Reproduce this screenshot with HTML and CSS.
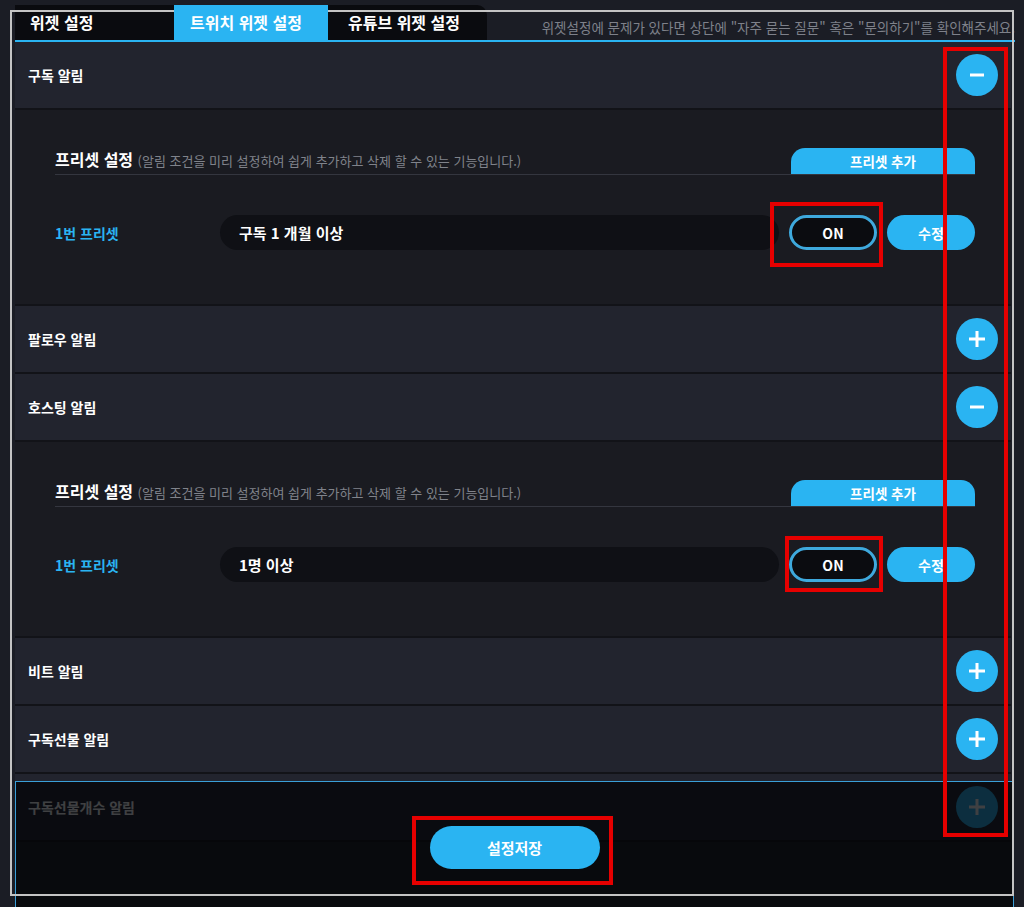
FILE: index.html
```html
<!DOCTYPE html>
<html lang="ko">
<head>
    <meta charset="UTF-8">
    <meta name="viewport" content="width=device-width, initial-scale=1.0">
    <title>트위치 위젯 설정</title>
    <link rel="stylesheet" href="styles.css">
</head>
<body>
    <div class="page">
        <div class="top-bar">
            <div class="tabs">
                <div class="tab tab-first">위젯 설정</div>
                <div class="tab active">트위치 위젯 설정</div>
                <div class="tab tab-last">유튜브 위젯 설정</div>
            </div>
            <p class="notice">위젯설정에 문제가 있다면 상단에 "자주 묻는 질문" 혹은 "문의하기"를 확인해주세요.</p>
        </div>

        <div class="list">
            <!-- 구독 알림 -->
            <div class="item">
                <div class="item-head">
                    <span class="item-title">구독 알림</span>
                    <span class="round-btn">
                        <svg width="16" height="16" viewBox="0 0 16 16"><path d="M1 8h14" stroke="#fff" stroke-width="3"/></svg>
                    </span>
                </div>
                <div class="item-body">
                    <div class="preset-head">
                        <h3>프리셋 설정 <small>(알림 조건을 미리 설정하여 쉽게 추가하고 삭제 할 수 있는 기능입니다.)</small></h3>
                        <span class="add-btn">프리셋 추가</span>
                    </div>
                    <div class="preset-row">
                        <span class="preset-label">1번 프리셋</span>
                        <div class="preset-value">구독 1 개월 이상</div>
                        <span class="on-btn">ON</span>
                        <span class="edit-btn">수정</span>
                    </div>
                </div>
            </div>

            <!-- 팔로우 알림 -->
            <div class="item">
                <div class="item-head">
                    <span class="item-title">팔로우 알림</span>
                    <span class="round-btn">
                        <svg width="16" height="16" viewBox="0 0 16 16"><path d="M0 8h16M8 0v16" stroke="#fff" stroke-width="3"/></svg>
                    </span>
                </div>
            </div>

            <!-- 호스팅 알림 -->
            <div class="item">
                <div class="item-head">
                    <span class="item-title">호스팅 알림</span>
                    <span class="round-btn">
                        <svg width="16" height="16" viewBox="0 0 16 16"><path d="M1 8h14" stroke="#fff" stroke-width="3"/></svg>
                    </span>
                </div>
                <div class="item-body">
                    <div class="preset-head">
                        <h3>프리셋 설정 <small>(알림 조건을 미리 설정하여 쉽게 추가하고 삭제 할 수 있는 기능입니다.)</small></h3>
                        <span class="add-btn">프리셋 추가</span>
                    </div>
                    <div class="preset-row">
                        <span class="preset-label">1번 프리셋</span>
                        <div class="preset-value">1명 이상</div>
                        <span class="on-btn">ON</span>
                        <span class="edit-btn">수정</span>
                    </div>
                </div>
            </div>

            <!-- 비트 알림 -->
            <div class="item">
                <div class="item-head">
                    <span class="item-title">비트 알림</span>
                    <span class="round-btn">
                        <svg width="16" height="16" viewBox="0 0 16 16"><path d="M0 8h16M8 0v16" stroke="#fff" stroke-width="3"/></svg>
                    </span>
                </div>
            </div>

            <!-- 구독선물 알림 -->
            <div class="item">
                <div class="item-head">
                    <span class="item-title">구독선물 알림</span>
                    <span class="round-btn">
                        <svg width="16" height="16" viewBox="0 0 16 16"><path d="M0 8h16M8 0v16" stroke="#fff" stroke-width="3"/></svg>
                    </span>
                </div>
            </div>

            <!-- 구독선물개수 알림 -->
            <div class="item">
                <div class="item-head">
                    <span class="item-title">구독선물개수 알림</span>
                    <span class="round-btn">
                        <svg width="16" height="16" viewBox="0 0 16 16"><path d="M0 8h16M8 0v16" stroke="#fff" stroke-width="3"/></svg>
                    </span>
                </div>
            </div>
        </div>

        <div class="save-bar">
            <span class="save-btn">설정저장</span>
        </div>
    </div>

    <!-- 캡처 테두리 + 빨간 표시 -->
    <div class="frame"></div>
    <div class="mark mark-side"></div>
    <div class="mark mark-on1"></div>
    <div class="mark mark-on2"></div>
    <div class="mark mark-save"></div>
</body>
</html>
```

FILE: styles.css
```css
/* Reset */
* {
    margin: 0;
    padding: 0;
    box-sizing: border-box;
}

body {
    font-family: "Noto Sans CJK KR", "Noto Sans", sans-serif;
    background: #1b1d25;
    color: #fff;
    height: 907px;
    overflow: hidden;
    position: relative;
}

.page {
    width: 1000px;
    margin-left: 15px;
    padding-top: 5px;
}

/* 상단 탭 */
.top-bar {
    display: flex;
    align-items: flex-end;
    height: 37px;
    border-bottom: 2px solid #2ab4f2;
    overflow: hidden;
}

.tabs {
    display: flex;
    background: #0a0b0f;
    border-top-right-radius: 10px;
    height: 35px;
}

.tab {
    height: 35px;
    line-height: 35px;
    font-size: 16px;
    font-weight: 700;
    padding-left: 16px;
    color: #fff;
}

.tab-first {
    width: 159px;
    padding-left: 15px;
}

.tab.active {
    width: 154px;
    background: #2ab4f2;
    position: relative;
    z-index: 3;
}

.tab-last {
    width: 159px;
    padding-left: 20px;
}

.notice {
    margin-left: auto;
    white-space: nowrap;
    font-size: 13.5px;
    color: #7e818a;
    line-height: 20px;
    margin-bottom: 3px;
}

/* 알림 목록 */
.list {
    margin-right: 4px;
}

.item-head {
    height: 68px;
    background: #22242e;
    border-bottom: 2px solid #121318;
    display: flex;
    align-items: center;
    justify-content: space-between;
    padding: 0 13px;
}

.item-title {
    font-size: 14px;
    font-weight: 700;
}

.round-btn {
    width: 42px;
    height: 42px;
    border-radius: 50%;
    background: #2ab4f2;
    display: flex;
    align-items: center;
    justify-content: center;
}

.item-body {
    height: 196px;
    background: #1a1b21;
    border-bottom: 2px solid #121318;
    padding: 38px 36px 0 40px;
}

.preset-head {
    display: flex;
    align-items: flex-end;
    justify-content: space-between;
    height: 27px;
    border-bottom: 1px solid #34363f;
}

.preset-head h3 {
    font-size: 16px;
    font-weight: 700;
    line-height: 24px;
    margin-bottom: 1px;
}

.preset-head small {
    font-size: 13px;
    font-weight: 400;
    color: #80838b;
}

.add-btn {
    width: 184px;
    height: 26px;
    line-height: 26px;
    text-align: center;
    background: #2ab4f2;
    border-radius: 14px 14px 0 0;
    font-size: 13.5px;
    font-weight: 700;
}

.preset-row {
    display: flex;
    align-items: center;
    gap: 10px;
    margin-top: 40px;
    height: 35px;
}

.preset-label {
    width: 155px;
    font-size: 14px;
    font-weight: 700;
    color: #2ab4f2;
}

.preset-value {
    flex: 1;
    height: 35px;
    line-height: 35px;
    background: #0f1015;
    border-radius: 18px;
    padding-left: 19px;
    font-size: 15px;
    font-weight: 700;
}

.on-btn,
.edit-btn {
    width: 88px;
    height: 35px;
    border-radius: 18px;
    display: flex;
    align-items: center;
    justify-content: center;
    font-size: 14px;
    font-weight: 700;
}

.on-btn {
    background: #0b0c10;
    border: 3px solid #3ea9dd;
}

.edit-btn {
    background: #2ab4f2;
}

/* 하단 저장 바 (목록 위에 고정) */
.save-bar {
    position: absolute;
    left: 15px;
    top: 781px;
    width: 999px;
    bottom: 0;
    background: rgba(3, 4, 7, 0.76);
    border: 1px solid #3a9fd8;
    border-bottom: none;
    z-index: 1;
    display: flex;
    justify-content: center;
    padding-top: 44px;
}

.save-btn {
    width: 170px;
    height: 43px;
    line-height: 43px;
    text-align: center;
    background: #2ab4f2;
    border-radius: 22px;
    font-size: 15px;
    font-weight: 700;
}

/* 캡처 테두리 */
.frame {
    position: absolute;
    left: 10px;
    top: 10px;
    width: 1004px;
    height: 886px;
    border: 2px solid #c4c4c4;
    z-index: 2;
    pointer-events: none;
}

/* 빨간 표시 */
.mark {
    position: absolute;
    border: 4px solid #e60000;
    z-index: 4;
    pointer-events: none;
}

.mark-side {
    left: 943px;
    top: 47px;
    width: 65px;
    height: 790px;
}

.mark-on1 {
    left: 770px;
    top: 202px;
    width: 113px;
    height: 65px;
}

.mark-on2 {
    left: 785px;
    top: 536px;
    width: 98px;
    height: 56px;
}

.mark-save {
    left: 412px;
    top: 816px;
    width: 201px;
    height: 69px;
}
```
